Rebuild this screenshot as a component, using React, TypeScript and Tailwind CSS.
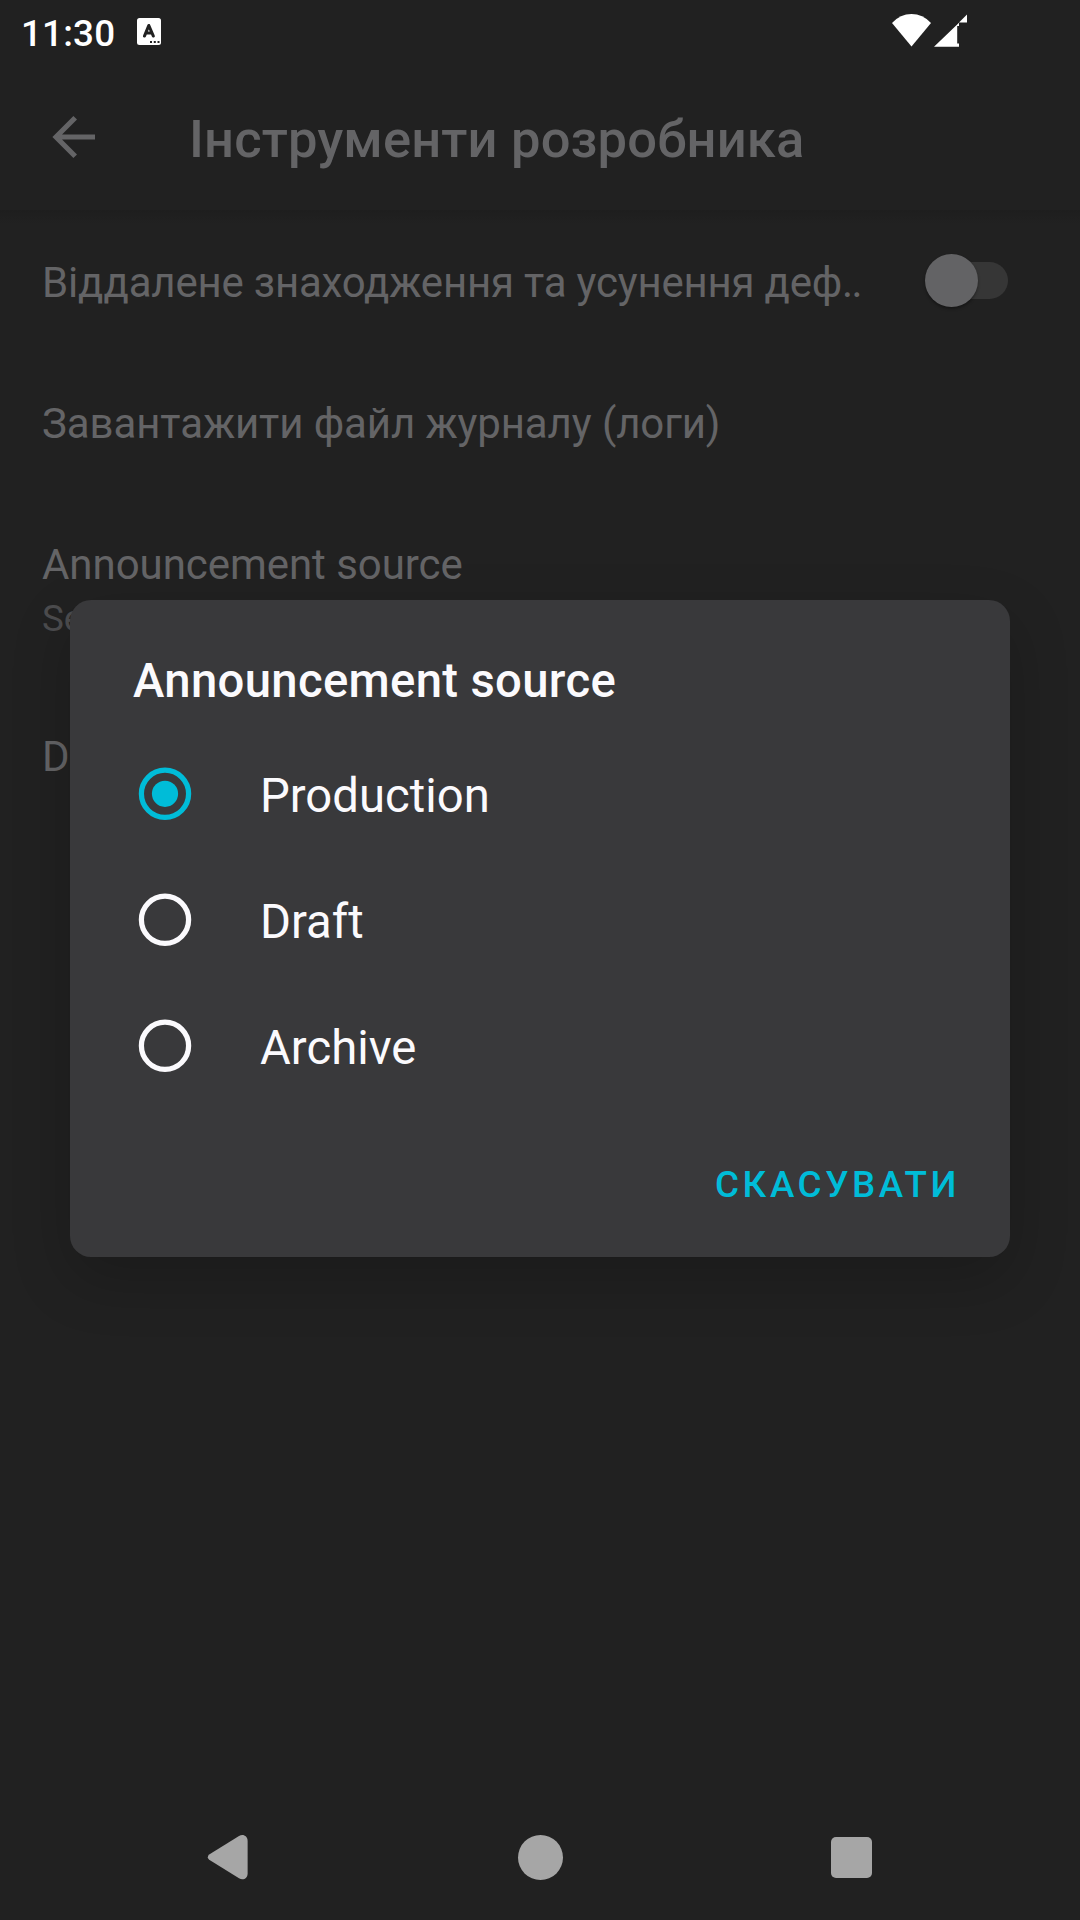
import React from "react";

const options = [
  { label: "Production", selected: true },
  { label: "Draft", selected: false },
  { label: "Archive", selected: false },
];

function StatusBar() {
  return (
    <div className="flex h-[63px] items-center pl-[21px] text-white">
      <span className="pt-[4px] text-[36.75px] leading-[44px] font-medium tracking-[0.2px]">11:30</span>
      <svg className="ml-[22px] h-[27px] w-[24px]" viewBox="0 0 24 27">
        <rect width="24" height="27" rx="2.5" fill="#fff" />
        <path d="M7.5 18 11.8 7.5 16.3 18M9.3 15h5" fill="none" stroke="#212121" strokeWidth="3.1" strokeLinecap="round" strokeLinejoin="round" />
        <path d="M13 23h2v2h-2zM16.8 23h2v2h-2zM20.5 23h2v2h-2z" fill="#212121" />
      </svg>
      <svg className="mr-[112px] mb-[2px] ml-auto h-[33px] w-[76px] shrink-0" viewBox="0 0 76 33">
        <path d="M0 9Q8.2 0 19.5 0T39 9L19.5 32.5z" fill="#fff" />
        <path d="M42 32.7 67 8.8V12H65.2V29.5H67V32.7zM67 8.6 75 .5V8.6z" fill="#fff" />
      </svg>
    </div>
  );
}

function Radio({ selected }: { selected: boolean }) {
  const color = selected ? "#00bcd8" : "#fbfafd";
  return (
    <svg className="size-[54px]" viewBox="0 0 54 54">
      <circle cx="27" cy="26.8" r="23.6" fill="none" stroke={color} strokeWidth="5.25" />
      {selected && <circle cx="27" cy="26.8" r="13.1" fill={color} />}
    </svg>
  );
}

function Dialog() {
  return (
    <div className="absolute top-[600px] left-[70px] flex h-[657px] w-[940px] flex-col rounded-[21px] bg-[#39393b] text-[#fbfafd] shadow-[0_22px_60px_rgba(0,0,0,0.2)]">
      <h2 className="pt-[53px] pl-[63px] text-[47.25px] leading-[56px] font-medium tracking-[0.33px]">Announcement source</h2>
      <div className="mt-[22px] flex flex-col">
        {options.map((o) => (
          <div key={o.label} className="flex h-[126px] items-center pl-[68px]">
            <Radio selected={o.selected} />
            <span className="ml-[68px] pt-[4px] text-[47.25px] leading-[56px]">{o.label}</span>
          </div>
        ))}
      </div>
      <button className="mt-[54px] mr-[50px] self-end text-[36.75px] leading-[43px] font-medium tracking-[3.6px] text-[#00bcd8]">
        СКАСУВАТИ
      </button>
    </div>
  );
}

export default function App() {
  return (
    <div className="relative flex h-[1920px] w-[1080px] flex-col overflow-hidden bg-[#212121] font-['Roboto',sans-serif]">
      <StatusBar />
      <header className="flex h-[147px] items-center pl-[52px] text-[#646466]">
        <svg className="h-[42px] w-[43px]" viewBox="0 0 43 42">
          <path d="M43 21H4M23.2 1.8 4 21 23.2 40.2" fill="none" stroke="currentColor" strokeWidth="5.1" />
        </svg>
        <h1 className="ml-[94px] pt-[4px] text-[52.5px] leading-[62px] font-medium tracking-[0.17px] whitespace-nowrap">Інструменти розробника</h1>
      </header>
      <div className="-mb-[12px] h-[14px] bg-linear-to-b from-[#1e1e1e] to-[#212121]" />
      <main className="flex grow flex-col text-[42px] leading-[49px] tracking-[-0.05px] text-[#646466]">
        <div className="flex h-[141px] items-center pl-[42px]">
          <span className="tracking-[-0.2px] whitespace-nowrap">
            Віддалене знаходження та усунення деф<span className="tracking-[-1.7px]">..</span>
          </span>
          <div className="mr-[72px] mb-[4px] ml-auto flex h-[37px] w-[74px] items-center rounded-full bg-[#363636]">
            <span className="-ml-[9px] size-[53px] shrink-0 rounded-full bg-[#636365] shadow-[0_2px_3px_rgba(0,0,0,0.35)]" />
          </div>
        </div>
        <div className="flex h-[141px] items-center pl-[42px] tracking-[-0.1px]">Завантажити файл журналу (логи)</div>
        <div className="flex h-[192px] flex-col pt-[46px] pl-[42px]">
          <span>Announcement source</span>
          <span className="mt-[8px] text-[36.75px] leading-[43px] text-[#4c4c4e]">Select source</span>
        </div>
        <div className="flex h-[141px] items-center pl-[42px]">Debug</div>
      </main>
      <nav className="flex h-[126px] items-center justify-between pr-[208px] pl-[207px]">
        <svg className="h-[46px] w-[41px]" viewBox="0 0 41 46">
          <path d="M2.2 20.5 32 2C36-.3 40.6 1.8 40.6 7V39.5C40.6 44.5 36 46.7 32 44.3L2.2 25.8Q-.6 23.2 2.2 20.5Z" fill="#a6a6a6" />
        </svg>
        <span className="-mr-px ml-px size-[45px] rounded-full bg-[#a6a6a6]" />
        <span className="size-[41px] rounded-[5px] bg-[#a6a6a6]" />
      </nav>
      <Dialog />
    </div>
  );
}
